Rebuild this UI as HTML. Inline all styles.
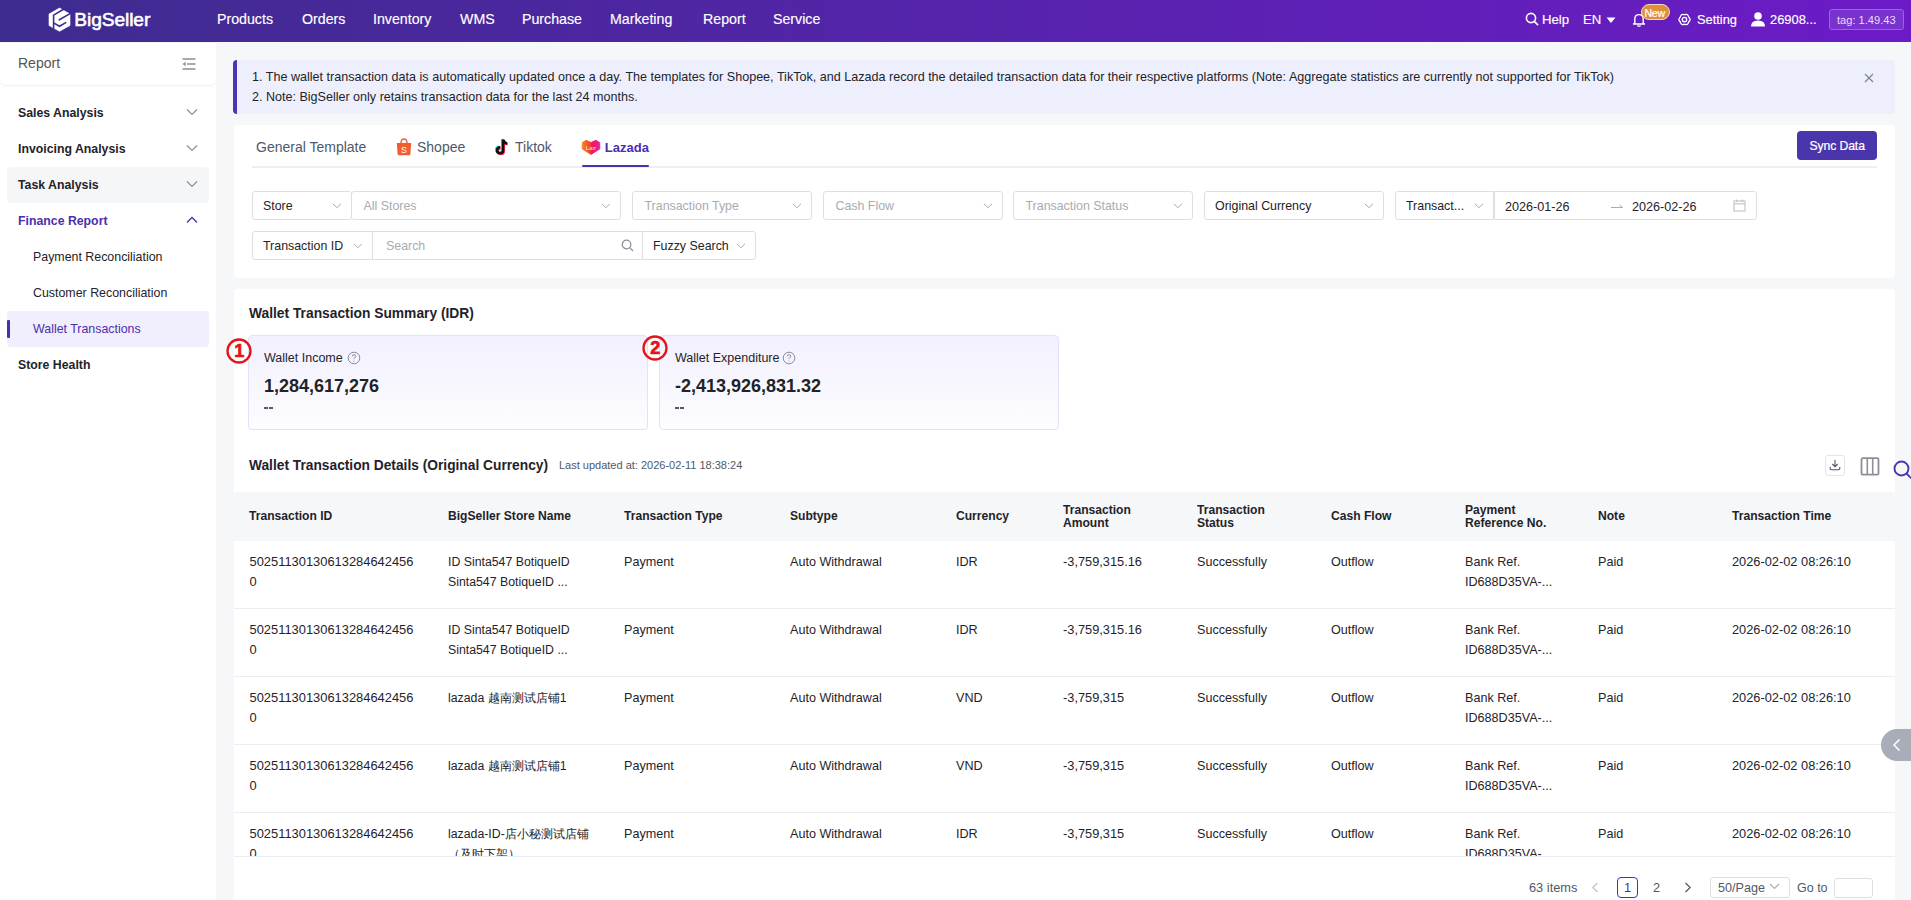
<!DOCTYPE html>
<html><head><meta charset="utf-8"><title>Wallet Transactions</title>
<style>
html,body{margin:0;padding:0;width:1911px;height:900px;overflow:hidden;background:#f5f6f8;font-family:"Liberation Sans",sans-serif}
.r{position:absolute}
.t{position:absolute;white-space:nowrap;line-height:20px}
</style></head><body>
<div class="r" style="left:0px;top:0px;width:1911px;height:42px;background:linear-gradient(90deg,#3e2c8f 0%,#6c1bc6 100%)"></div>
<svg class="r" style="left:44px;top:4px" width="32" height="32" viewBox="0 0 32 32">
<path d="M15.5 4 L26 10 L26 21.5 L15.5 27.3 L5 21.5 L5 10 Z" fill="#fff" stroke="#fff" stroke-width="0.6" stroke-linejoin="round"/>
<path d="M19.6 5.3 L9.6 11.1 L9.6 24.6 M9.6 18.9 L15.5 22.3 L21.8 18.6 M15.3 15.8 L27 9.1" fill="none" stroke="#3f2c90" stroke-width="1.6" stroke-linecap="round"/>
</svg>
<div class="t " style="left:74.3px;top:9.95px;font-size:19.2px;font-weight:400;color:#fff;-webkit-text-stroke:0.6px #fff;letter-spacing:-0.1px">BigSeller</div>
<div class="t " style="left:217px;top:8.78px;font-size:14.2px;font-weight:400;color:#fff;-webkit-text-stroke:0.15px #fff">Products</div>
<div class="t " style="left:302px;top:8.78px;font-size:14.2px;font-weight:400;color:#fff;-webkit-text-stroke:0.15px #fff">Orders</div>
<div class="t " style="left:373px;top:8.78px;font-size:14.2px;font-weight:400;color:#fff;-webkit-text-stroke:0.15px #fff">Inventory</div>
<div class="t " style="left:460px;top:8.78px;font-size:14.2px;font-weight:400;color:#fff;-webkit-text-stroke:0.15px #fff">WMS</div>
<div class="t " style="left:522px;top:8.78px;font-size:14.2px;font-weight:400;color:#fff;-webkit-text-stroke:0.15px #fff">Purchase</div>
<div class="t " style="left:610px;top:8.78px;font-size:14.2px;font-weight:400;color:#fff;-webkit-text-stroke:0.15px #fff">Marketing</div>
<div class="t " style="left:703px;top:8.78px;font-size:14.2px;font-weight:400;color:#fff;-webkit-text-stroke:0.15px #fff">Report</div>
<div class="t " style="left:773px;top:8.78px;font-size:14.2px;font-weight:400;color:#fff;-webkit-text-stroke:0.15px #fff">Service</div>
<svg class="r" style="left:1525px;top:12px" width="14" height="14" viewBox="0 0 14 14"><circle cx="6" cy="6" r="4.6" fill="none" stroke="#fff" stroke-width="1.6"/><path d="M9.3 9.3 L12.6 12.6" stroke="#fff" stroke-width="1.7" stroke-linecap="round"/></svg>
<div class="t " style="left:1542px;top:9.93px;font-size:13.2px;font-weight:400;color:#fff;-webkit-text-stroke:0.15px #fff">Help</div>
<div class="t " style="left:1583px;top:9.93px;font-size:13.2px;font-weight:400;color:#fff;-webkit-text-stroke:0.15px #fff">EN</div>
<svg class="r" style="left:1606px;top:17px" width="10" height="7" viewBox="0 0 10 7"><path d="M0.5 0.5 L9.5 0.5 L5 6 Z" fill="#fff"/></svg>
<svg class="r" style="left:1632px;top:13px" width="14" height="14" viewBox="0 0 14 14"><path d="M2.8 10 L2.8 6.2 Q2.8 1.6 7 1.6 Q11.2 1.6 11.2 6.2 L11.2 10 L12.5 11 L1.5 11 Z" fill="none" stroke="#fff" stroke-width="1.4" stroke-linejoin="round"/><path d="M5.4 12.4 Q7 13.8 8.6 12.4" fill="none" stroke="#fff" stroke-width="1.3"/></svg>
<div class="r" style="left:1641px;top:4px;width:29px;height:16px;border-radius:8px;background:#df8f3e;border:1px solid #f3d9bd;box-sizing:border-box"></div>
<div class="t " style="left:1644.5px;top:2.93px;font-size:10.6px;font-weight:400;color:#fff;letter-spacing:-0.3px;-webkit-text-stroke:0.2px #fff">New</div>
<svg class="r" style="left:1676.5px;top:12.3px" width="15" height="15" viewBox="0 0 15 15"><path d="M12.64 6.32 Q13.70 7.50 12.64 8.68 Q11.57 9.85 11.09 11.36 Q10.60 12.87 9.05 12.53 Q7.50 12.20 5.95 12.53 Q4.40 12.87 3.91 11.36 Q3.43 9.85 2.36 8.68 Q1.30 7.50 2.36 6.33 Q3.43 5.15 3.91 3.64 Q4.40 2.13 5.95 2.47 Q7.50 2.80 9.05 2.47 Q10.60 2.13 11.09 3.64 Q11.57 5.15 12.64 6.32 Z" fill="none" stroke="#fff" stroke-width="1.35" stroke-linejoin="round"/><circle cx="7.5" cy="7.5" r="2.2" fill="none" stroke="#fff" stroke-width="1.35"/></svg>
<div class="t " style="left:1697px;top:10.05px;font-size:12.85px;font-weight:400;color:#fff;-webkit-text-stroke:0.15px #fff">Setting</div>
<svg class="r" style="left:1750px;top:11px" width="16" height="16" viewBox="0 0 16 16"><circle cx="8" cy="5" r="3.8" fill="#fff"/><path d="M1 15.5 Q1 9.5 8 9.5 Q15 9.5 15 15.5 Z" fill="#fff"/></svg>
<div class="t " style="left:1770px;top:10.03px;font-size:12.9px;font-weight:400;color:#fff;-webkit-text-stroke:0.15px #fff">26908...</div>
<div class="r" style="left:1829px;top:9px;width:75px;height:21px;border-radius:3px;background:#7a32cf;border:1px solid #9a62dc;box-sizing:border-box"></div>
<div class="t " style="left:1837px;top:9.65px;font-size:11.1px;font-weight:400;color:#e8dcf7;">tag: 1.49.43</div>
<div class="r" style="left:0px;top:42px;width:216px;height:858px;background:#fff"></div>
<div class="r" style="left:0px;top:42px;width:216px;height:43px;background:#fff;border-radius:0 0 6px 6px;box-shadow:0 1px 2px rgba(0,0,0,0.07)"></div>
<div class="r" style="left:0px;top:42px;width:216px;height:1px;background:#f2f3f5"></div>
<div class="t " style="left:18px;top:53.45px;font-size:14px;font-weight:400;color:#555;">Report</div>
<svg class="r" style="left:182px;top:58px" width="14" height="12" viewBox="0 0 14 12"><path d="M0.5 1 H13.5 M5 6 H13.5 M0.5 11 H13.5" stroke="#8a8f99" stroke-width="1.5"/><path d="M0.5 6 L3.6 3.8 L3.6 8.2 Z" fill="#8a8f99"/></svg>
<div class="r" style="left:7px;top:167px;width:202px;height:36px;background:#f5f6f8;border-radius:4px"></div>
<div class="t " style="left:18px;top:102.94px;font-size:12.3px;font-weight:700;color:#1f2329;">Sales Analysis</div>
<svg class="r" style="left:186px;top:108.2px" width="12" height="8" viewBox="0 0 12 8"><path d="M1 1.5 L6 6.5 L11 1.5" fill="none" stroke="#8a8f99" stroke-width="1.2"/></svg>
<div class="t " style="left:18px;top:138.94px;font-size:12.3px;font-weight:700;color:#1f2329;">Invoicing Analysis</div>
<svg class="r" style="left:186px;top:144.2px" width="12" height="8" viewBox="0 0 12 8"><path d="M1 1.5 L6 6.5 L11 1.5" fill="none" stroke="#8a8f99" stroke-width="1.2"/></svg>
<div class="t " style="left:18px;top:174.94px;font-size:12.3px;font-weight:700;color:#1f2329;">Task Analysis</div>
<svg class="r" style="left:186px;top:180.2px" width="12" height="8" viewBox="0 0 12 8"><path d="M1 1.5 L6 6.5 L11 1.5" fill="none" stroke="#8a8f99" stroke-width="1.2"/></svg>
<div class="t " style="left:18px;top:210.94px;font-size:12.3px;font-weight:700;color:#4b2fb0;">Finance Report</div>
<svg class="r" style="left:186px;top:216.2px" width="12" height="8" viewBox="0 0 12 8"><path d="M1 6.5 L6 1.5 L11 6.5" fill="none" stroke="#4b2fb0" stroke-width="1.3"/></svg>
<div class="t " style="left:18px;top:355.04px;font-size:12.3px;font-weight:700;color:#1f2329;">Store Health</div>
<div class="r" style="left:7px;top:311px;width:202px;height:36px;background:#f1eefd;border-radius:4px"></div>
<div class="r" style="left:7px;top:320px;width:3px;height:18px;background:#4b2fb0;border-radius:1px"></div>
<div class="t " style="left:33px;top:246.50px;font-size:12.4px;font-weight:400;color:#1f2329;">Payment Reconciliation</div>
<div class="t " style="left:33px;top:282.50px;font-size:12.4px;font-weight:400;color:#1f2329;">Customer Reconciliation</div>
<div class="t " style="left:33px;top:318.50px;font-size:12.4px;font-weight:400;color:#4b2fb0;">Wallet Transactions</div>
<div class="r" style="left:216px;top:42px;width:1695px;height:858px;background:#f6f7f9"></div>
<div class="r" style="left:233px;top:60px;width:1662px;height:54px;background:#edf0fc;border-radius:4px"></div>
<div class="r" style="left:233px;top:60px;width:4px;height:54px;background:#4b35b0;border-radius:4px 0 0 4px"></div>
<div class="t " style="left:252px;top:67.24px;font-size:12.58px;font-weight:400;color:#1f2329;">1. The wallet transaction data is automatically updated once a day. The templates for Shopee, TikTok, and Lazada record the detailed transaction data for their respective platforms (Note: Aggregate statistics are currently not supported for TikTok)</div>
<div class="t " style="left:252px;top:87.15px;font-size:12.55px;font-weight:400;color:#1f2329;">2. Note: BigSeller only retains transaction data for the last 24 months.</div>
<svg class="r" style="left:1864px;top:73px" width="10" height="10" viewBox="0 0 10 10"><path d="M1 1 L9 9 M9 1 L1 9" stroke="#7a7f88" stroke-width="1.1"/></svg>
<div class="r" style="left:234px;top:125px;width:1661px;height:153px;background:#fff;border-radius:4px"></div>
<div class="r" style="left:252px;top:166px;width:1625px;height:2px;background:#eceef1"></div>
<div class="t " style="left:256px;top:137.15px;font-size:14px;font-weight:400;color:#4e5969;">General Template</div>
<svg class="r" style="left:396px;top:138px" width="16" height="18" viewBox="0 0 16 18"><path d="M5 5 Q5 1 8 1 Q11 1 11 5" fill="none" stroke="#f05d32" stroke-width="1.4"/><path d="M0.8 5 L15.2 5 L14.4 16 Q14.3 17.3 13 17.3 L3 17.3 Q1.7 17.3 1.6 16 Z" fill="#f05d32"/><text x="8" y="14.5" font-family="Liberation Sans" font-size="9" fill="#fff" text-anchor="middle">S</text></svg>
<div class="t " style="left:417px;top:137.15px;font-size:14px;font-weight:400;color:#4e5969;">Shopee</div>
<svg class="r" style="left:493px;top:138px" width="18" height="18" viewBox="0 0 18 18">
<g transform="translate(-0.8,-0.6)"><path d="M10 1.5 L10 12.3 Q10 15.3 7 15.3 Q4 15.3 4 12.3 Q4 9.3 7 9.3 M10 1.5 Q10.5 5 14 5.5" fill="none" stroke="#25f4ee" stroke-width="2.6"/></g>
<g transform="translate(0.8,0.6)"><path d="M10 1.5 L10 12.3 Q10 15.3 7 15.3 Q4 15.3 4 12.3 Q4 9.3 7 9.3 M10 1.5 Q10.5 5 14 5.5" fill="none" stroke="#fe2c55" stroke-width="2.6"/></g>
<path d="M10 1.5 L10 12.3 Q10 15.3 7 15.3 Q4 15.3 4 12.3 Q4 9.3 7 9.3 M10 1.5 Q10.5 5 14 5.5" fill="none" stroke="#111" stroke-width="2.6"/></svg>
<div class="t " style="left:515px;top:137.15px;font-size:14px;font-weight:400;color:#4e5969;">Tiktok</div>
<svg class="r" style="left:581px;top:139px" width="20" height="17" viewBox="0 0 20 17"><defs><linearGradient id="lz" x1="0" y1="0" x2="1" y2="0"><stop offset="0" stop-color="#f5821f"/><stop offset="0.45" stop-color="#f2432f"/><stop offset="0.55" stop-color="#ef1a4f"/><stop offset="1" stop-color="#f01aa8"/></linearGradient></defs><path d="M1.3 3.6 L5.1 1.3 L10 3.5 L14.9 1.3 L18.7 3.6 L18.7 10 L10 15.4 L1.3 10 Z" fill="url(#lz)" stroke="url(#lz)" stroke-width="0.9" stroke-linejoin="round"/><text x="9.8" y="10.6" font-family="Liberation Sans" font-size="6.2" fill="#fff" fill-opacity="0.9" text-anchor="middle">Laz</text></svg>
<div class="t " style="left:604.8px;top:138.30px;font-size:13px;font-weight:700;color:#4b2fb0;">Lazada</div>
<div class="r" style="left:582px;top:165px;width:67px;height:2.4px;background:#4b2fb0;border-radius:1px"></div>
<div class="r" style="left:1797px;top:131px;width:80px;height:29px;background:#4a35ad;border-radius:4px"></div>
<div class="t " style="left:1809.5px;top:136.07px;font-size:12.2px;font-weight:400;color:#fff;letter-spacing:-0.1px;-webkit-text-stroke:0.2px #fff">Sync Data</div>
<div class="r" style="left:252px;top:191px;width:99.5px;height:29px;box-sizing:border-box;border:1px solid #dcdfe6;border-radius:3px;background:#fff"></div>
<div class="t " style="left:263px;top:196.20px;font-size:12.4px;font-weight:400;color:#1f2329;">Store</div>
<svg class="r" style="left:331.5px;top:202.6px" width="10" height="6" viewBox="0 0 10 6"><path d="M0.8 0.8 L4.9 4.7 L9 0.8" fill="none" stroke="#a8abb2" stroke-width="1"/></svg>
<div class="r" style="left:351px;top:191px;width:270px;height:29px;box-sizing:border-box;border:1px solid #dcdfe6;border-radius:3px;background:#fff"></div>
<div class="t " style="left:363.5px;top:196.20px;font-size:12.4px;font-weight:400;color:#a8abb2;">All Stores</div>
<svg class="r" style="left:601px;top:202.6px" width="10" height="6" viewBox="0 0 10 6"><path d="M0.8 0.8 L4.9 4.7 L9 0.8" fill="none" stroke="#a8abb2" stroke-width="1"/></svg>
<div class="r" style="left:632px;top:191px;width:180px;height:29px;box-sizing:border-box;border:1px solid #dcdfe6;border-radius:3px;background:#fff"></div>
<div class="t " style="left:644.5px;top:196.20px;font-size:12.4px;font-weight:400;color:#a8abb2;">Transaction Type</div>
<svg class="r" style="left:792px;top:202.6px" width="10" height="6" viewBox="0 0 10 6"><path d="M0.8 0.8 L4.9 4.7 L9 0.8" fill="none" stroke="#a8abb2" stroke-width="1"/></svg>
<div class="r" style="left:823px;top:191px;width:180px;height:29px;box-sizing:border-box;border:1px solid #dcdfe6;border-radius:3px;background:#fff"></div>
<div class="t " style="left:835.5px;top:196.20px;font-size:12.4px;font-weight:400;color:#a8abb2;">Cash Flow</div>
<svg class="r" style="left:983px;top:202.6px" width="10" height="6" viewBox="0 0 10 6"><path d="M0.8 0.8 L4.9 4.7 L9 0.8" fill="none" stroke="#a8abb2" stroke-width="1"/></svg>
<div class="r" style="left:1013px;top:191px;width:180px;height:29px;box-sizing:border-box;border:1px solid #dcdfe6;border-radius:3px;background:#fff"></div>
<div class="t " style="left:1025.5px;top:196.20px;font-size:12.4px;font-weight:400;color:#a8abb2;">Transaction Status</div>
<svg class="r" style="left:1173px;top:202.6px" width="10" height="6" viewBox="0 0 10 6"><path d="M0.8 0.8 L4.9 4.7 L9 0.8" fill="none" stroke="#a8abb2" stroke-width="1"/></svg>
<div class="r" style="left:1204px;top:191px;width:180px;height:29px;box-sizing:border-box;border:1px solid #dcdfe6;border-radius:3px;background:#fff"></div>
<div class="t " style="left:1215px;top:196.20px;font-size:12.4px;font-weight:400;color:#1f2329;">Original Currency</div>
<svg class="r" style="left:1364px;top:202.6px" width="10" height="6" viewBox="0 0 10 6"><path d="M0.8 0.8 L4.9 4.7 L9 0.8" fill="none" stroke="#a8abb2" stroke-width="1"/></svg>
<div class="r" style="left:1395px;top:191px;width:99px;height:29px;box-sizing:border-box;border:1px solid #dcdfe6;border-radius:3px 0 0 3px;background:#fff"></div>
<div class="t " style="left:1406px;top:196.20px;font-size:12.4px;font-weight:400;color:#1f2329;">Transact...</div>
<svg class="r" style="left:1474px;top:202.6px" width="10" height="6" viewBox="0 0 10 6"><path d="M0.8 0.8 L4.9 4.7 L9 0.8" fill="none" stroke="#a8abb2" stroke-width="1"/></svg>
<div class="r" style="left:1494px;top:191px;width:263px;height:29px;box-sizing:border-box;border:1px solid #dcdfe6;border-radius:0 3px 3px 0;background:#fff"></div>
<div class="t " style="left:1505px;top:196.83px;font-size:12.6px;font-weight:400;color:#1f2329;">2026-01-26</div>
<div class="t " style="left:1632px;top:196.83px;font-size:12.6px;font-weight:400;color:#1f2329;">2026-02-26</div>
<svg class="r" style="left:1610px;top:202px" width="14" height="8" viewBox="0 0 14 8"><path d="M1 5.5 L12.5 5.5 L9.5 3" fill="none" stroke="#a8abb2" stroke-width="1"/></svg>
<svg class="r" style="left:1733px;top:199px" width="13" height="13" viewBox="0 0 13 13"><rect x="1" y="2" width="11" height="10" fill="none" stroke="#b8bcc4" stroke-width="1"/><path d="M1 4.8 H12 M3.8 0.5 V3 M9.2 0.5 V3" stroke="#b8bcc4" stroke-width="1"/></svg>
<div class="r" style="left:252px;top:231px;width:121px;height:29px;box-sizing:border-box;border:1px solid #dcdfe6;border-radius:3px 0 0 3px;background:#fff"></div>
<div class="t " style="left:263px;top:236.20px;font-size:12.4px;font-weight:400;color:#1f2329;">Transaction ID</div>
<svg class="r" style="left:353px;top:242.6px" width="10" height="6" viewBox="0 0 10 6"><path d="M0.8 0.8 L4.9 4.7 L9 0.8" fill="none" stroke="#a8abb2" stroke-width="1"/></svg>
<div class="r" style="left:372px;top:231px;width:271px;height:29px;box-sizing:border-box;border:1px solid #dcdfe6;background:#fff"></div>
<div class="t " style="left:386px;top:236.30px;font-size:12.4px;font-weight:400;color:#a8abb2;">Search</div>
<svg class="r" style="left:621px;top:239px" width="13" height="13" viewBox="0 0 13 13"><circle cx="5.5" cy="5.5" r="4.3" fill="none" stroke="#8a8f99" stroke-width="1.2"/><path d="M8.7 8.7 L12 12" stroke="#8a8f99" stroke-width="1.2"/></svg>
<div class="r" style="left:642px;top:231px;width:114px;height:29px;box-sizing:border-box;border:1px solid #dcdfe6;border-radius:0 3px 3px 0;background:#fff"></div>
<div class="t " style="left:653px;top:236.20px;font-size:12.4px;font-weight:400;color:#1f2329;">Fuzzy Search</div>
<svg class="r" style="left:736px;top:242.6px" width="10" height="6" viewBox="0 0 10 6"><path d="M0.8 0.8 L4.9 4.7 L9 0.8" fill="none" stroke="#a8abb2" stroke-width="1"/></svg>
<div class="r" style="left:234px;top:289px;width:1661px;height:611px;background:#fff;border-radius:4px 4px 0 0"></div>
<div class="t " style="left:249px;top:304.42px;font-size:13.8px;font-weight:700;color:#1f2329;">Wallet Transaction Summary (IDR)</div>
<div class="r" style="left:248px;top:335px;width:400px;height:95px;box-sizing:border-box;border:1px solid #e1e3fb;border-radius:4px;background:linear-gradient(180deg,#f2f0fe 0%,#fdfdff 100%)"></div>
<div class="t " style="left:264px;top:348.07px;font-size:12.5px;font-weight:400;color:#1f2329;">Wallet Income</div>
<div class="r" style="left:264px;top:407px;width:4px;height:2px;background:#555b66"></div>
<div class="r" style="left:269px;top:407px;width:4px;height:2px;background:#555b66"></div>
<div class="t " style="left:264px;top:375.56px;font-size:18px;font-weight:700;color:#1f2329;">1,284,617,276</div>
<div class="r" style="left:659px;top:335px;width:400px;height:95px;box-sizing:border-box;border:1px solid #e1e3fb;border-radius:4px;background:linear-gradient(180deg,#f2f0fe 0%,#fdfdff 100%)"></div>
<div class="t " style="left:675px;top:348.07px;font-size:12.5px;font-weight:400;color:#1f2329;">Wallet Expenditure</div>
<div class="r" style="left:675px;top:407px;width:4px;height:2px;background:#555b66"></div>
<div class="r" style="left:680px;top:407px;width:4px;height:2px;background:#555b66"></div>
<div class="t " style="left:675px;top:375.56px;font-size:18px;font-weight:700;color:#1f2329;">-2,413,926,831.32</div>
<svg class="r" style="left:347px;top:351px" width="14" height="14" viewBox="0 0 14 14"><circle cx="7" cy="7" r="5.8" fill="none" stroke="#8a8f99" stroke-width="1"/><path d="M5.2 5.4 Q5.2 3.7 7 3.7 Q8.8 3.7 8.8 5.3 Q8.8 6.3 7.6 6.8 Q7 7.1 7 8.1" fill="none" stroke="#8a8f99" stroke-width="1"/><circle cx="7" cy="10" r="0.6" fill="#8a8f99"/></svg>
<svg class="r" style="left:782px;top:351px" width="14" height="14" viewBox="0 0 14 14"><circle cx="7" cy="7" r="5.8" fill="none" stroke="#8a8f99" stroke-width="1"/><path d="M5.2 5.4 Q5.2 3.7 7 3.7 Q8.8 3.7 8.8 5.3 Q8.8 6.3 7.6 6.8 Q7 7.1 7 8.1" fill="none" stroke="#8a8f99" stroke-width="1"/><circle cx="7" cy="10" r="0.6" fill="#8a8f99"/></svg>
<svg class="r" style="left:226px;top:338px" width="26" height="26" viewBox="0 0 26 26"><circle cx="13" cy="13" r="11.5" fill="none" stroke="#e3131b" stroke-width="2.3"/><text x="13.2" y="18.8" font-family="Liberation Sans" font-weight="700" font-size="18" fill="#e3131b" stroke="#e3131b" stroke-width="0.7" text-anchor="middle">1</text></svg>
<svg class="r" style="left:642px;top:335px" width="26" height="26" viewBox="0 0 26 26"><circle cx="13" cy="13" r="11.5" fill="none" stroke="#e3131b" stroke-width="2.3"/><text x="13.2" y="18.8" font-family="Liberation Sans" font-weight="700" font-size="18" fill="#e3131b" stroke="#e3131b" stroke-width="0.7" text-anchor="middle">2</text></svg>
<div class="t " style="left:249px;top:455.64px;font-size:13.75px;font-weight:700;color:#1f2329;">Wallet Transaction Details (Original Currency)</div>
<div class="t " style="left:559px;top:454.99px;font-size:11px;font-weight:400;color:#4e5969;">Last updated at: 2026-02-11 18:38:24</div>
<div class="r" style="left:1825px;top:455px;width:20px;height:21px;box-sizing:border-box;border:1px solid #e3e5ea;border-radius:3px;background:#fff"></div>
<svg class="r" style="left:1829px;top:459px" width="12" height="12" viewBox="0 0 12 12"><path d="M6 1 V7.5 M3.3 5 L6 7.7 L8.7 5" fill="none" stroke="#4e5969" stroke-width="1.1"/><path d="M1.2 8 V9.6 Q1.2 10.8 2.4 10.8 H9.6 Q10.8 10.8 10.8 9.6 V8" fill="none" stroke="#4e5969" stroke-width="1.1"/></svg>
<svg class="r" style="left:1860px;top:457px" width="20" height="19" viewBox="0 0 20 19"><rect x="1.5" y="1.2" width="17" height="16.5" rx="1.5" fill="none" stroke="#8a8f99" stroke-width="1.8"/><path d="M7.3 1.5 V17.5 M12.7 1.5 V17.5" stroke="#8a8f99" stroke-width="1.6"/></svg>
<svg class="r" style="left:1892px;top:459px" width="19" height="22" viewBox="0 0 19 22"><circle cx="9.5" cy="9.5" r="7" fill="none" stroke="#4b35b5" stroke-width="1.9"/><path d="M14.5 14.5 L20 20" stroke="#4b35b5" stroke-width="1.9"/></svg>
<div class="r" style="left:234px;top:492px;width:1661px;height:49px;background:#f6f7f9;border-radius:4px 4px 0 0"></div>
<div class="t " style="left:249px;top:506.01px;font-size:12.1px;font-weight:700;color:#1f2329;">Transaction ID</div>
<div class="t " style="left:448px;top:506.01px;font-size:12.1px;font-weight:700;color:#1f2329;">BigSeller Store Name</div>
<div class="t " style="left:624px;top:506.01px;font-size:12.1px;font-weight:700;color:#1f2329;">Transaction Type</div>
<div class="t " style="left:790px;top:506.01px;font-size:12.1px;font-weight:700;color:#1f2329;">Subtype</div>
<div class="t " style="left:956px;top:506.01px;font-size:12.1px;font-weight:700;color:#1f2329;">Currency</div>
<div class="t " style="left:1063px;top:499.81px;font-size:12.1px;font-weight:700;color:#1f2329;">Transaction</div>
<div class="t " style="left:1063px;top:512.81px;font-size:12.1px;font-weight:700;color:#1f2329;">Amount</div>
<div class="t " style="left:1197px;top:499.81px;font-size:12.1px;font-weight:700;color:#1f2329;">Transaction</div>
<div class="t " style="left:1197px;top:512.81px;font-size:12.1px;font-weight:700;color:#1f2329;">Status</div>
<div class="t " style="left:1331px;top:506.01px;font-size:12.1px;font-weight:700;color:#1f2329;">Cash Flow</div>
<div class="t " style="left:1465px;top:499.81px;font-size:12.1px;font-weight:700;color:#1f2329;">Payment</div>
<div class="t " style="left:1465px;top:512.81px;font-size:12.1px;font-weight:700;color:#1f2329;">Reference No.</div>
<div class="t " style="left:1598px;top:506.01px;font-size:12.1px;font-weight:700;color:#1f2329;">Note</div>
<div class="t " style="left:1732px;top:506.01px;font-size:12.1px;font-weight:700;color:#1f2329;">Transaction Time</div>
<div class="r" style="left:234px;top:541px;width:1661px;height:315px;overflow:hidden">
<div class="t " style="left:15.5px;top:10.53px;font-size:12.9px;font-weight:400;color:#1f2329;">50251130130613284642456</div>
<div class="t " style="left:15.5px;top:30.53px;font-size:12.9px;font-weight:400;color:#1f2329;">0</div>
<div class="t " style="left:214px;top:10.74px;font-size:12.3px;font-weight:400;color:#1f2329;">ID Sinta547 BotiqueID</div>
<div class="t " style="left:214px;top:30.74px;font-size:12.3px;font-weight:400;color:#1f2329;">Sinta547 BotiqueID ...</div>
<div class="t " style="left:390px;top:10.63px;font-size:12.6px;font-weight:400;color:#1f2329;">Payment</div>
<div class="t " style="left:556px;top:10.63px;font-size:12.6px;font-weight:400;color:#1f2329;">Auto Withdrawal</div>
<div class="t " style="left:722px;top:10.63px;font-size:12.6px;font-weight:400;color:#1f2329;">IDR</div>
<div class="t " style="left:829px;top:10.56px;font-size:12.8px;font-weight:400;color:#1f2329;">-3,759,315.16</div>
<div class="t " style="left:963px;top:10.63px;font-size:12.6px;font-weight:400;color:#1f2329;">Successfully</div>
<div class="t " style="left:1097px;top:10.63px;font-size:12.6px;font-weight:400;color:#1f2329;">Outflow</div>
<div class="t " style="left:1231px;top:10.63px;font-size:12.6px;font-weight:400;color:#1f2329;">Bank Ref.</div>
<div class="t " style="left:1231px;top:30.63px;font-size:12.6px;font-weight:400;color:#1f2329;">ID688D35VA-...</div>
<div class="t " style="left:1364px;top:10.63px;font-size:12.6px;font-weight:400;color:#1f2329;">Paid</div>
<div class="t " style="left:1498px;top:10.56px;font-size:12.8px;font-weight:400;color:#1f2329;">2026-02-02 08:26:10</div>
<div class="r" style="left:0px;top:67px;width:1661px;height:1px;background:#ebedf0"></div>
<div class="t " style="left:15.5px;top:78.53px;font-size:12.9px;font-weight:400;color:#1f2329;">50251130130613284642456</div>
<div class="t " style="left:15.5px;top:98.53px;font-size:12.9px;font-weight:400;color:#1f2329;">0</div>
<div class="t " style="left:214px;top:78.74px;font-size:12.3px;font-weight:400;color:#1f2329;">ID Sinta547 BotiqueID</div>
<div class="t " style="left:214px;top:98.74px;font-size:12.3px;font-weight:400;color:#1f2329;">Sinta547 BotiqueID ...</div>
<div class="t " style="left:390px;top:78.63px;font-size:12.6px;font-weight:400;color:#1f2329;">Payment</div>
<div class="t " style="left:556px;top:78.63px;font-size:12.6px;font-weight:400;color:#1f2329;">Auto Withdrawal</div>
<div class="t " style="left:722px;top:78.63px;font-size:12.6px;font-weight:400;color:#1f2329;">IDR</div>
<div class="t " style="left:829px;top:78.56px;font-size:12.8px;font-weight:400;color:#1f2329;">-3,759,315.16</div>
<div class="t " style="left:963px;top:78.63px;font-size:12.6px;font-weight:400;color:#1f2329;">Successfully</div>
<div class="t " style="left:1097px;top:78.63px;font-size:12.6px;font-weight:400;color:#1f2329;">Outflow</div>
<div class="t " style="left:1231px;top:78.63px;font-size:12.6px;font-weight:400;color:#1f2329;">Bank Ref.</div>
<div class="t " style="left:1231px;top:98.63px;font-size:12.6px;font-weight:400;color:#1f2329;">ID688D35VA-...</div>
<div class="t " style="left:1364px;top:78.63px;font-size:12.6px;font-weight:400;color:#1f2329;">Paid</div>
<div class="t " style="left:1498px;top:78.56px;font-size:12.8px;font-weight:400;color:#1f2329;">2026-02-02 08:26:10</div>
<div class="r" style="left:0px;top:135px;width:1661px;height:1px;background:#ebedf0"></div>
<div class="t " style="left:15.5px;top:146.53px;font-size:12.9px;font-weight:400;color:#1f2329;">50251130130613284642456</div>
<div class="t " style="left:15.5px;top:166.53px;font-size:12.9px;font-weight:400;color:#1f2329;">0</div>
<div class="t " style="left:214px;top:146.74px;font-size:12.3px;font-weight:400;color:#1f2329;">lazada 越南测试店铺1</div>
<div class="t " style="left:390px;top:146.63px;font-size:12.6px;font-weight:400;color:#1f2329;">Payment</div>
<div class="t " style="left:556px;top:146.63px;font-size:12.6px;font-weight:400;color:#1f2329;">Auto Withdrawal</div>
<div class="t " style="left:722px;top:146.63px;font-size:12.6px;font-weight:400;color:#1f2329;">VND</div>
<div class="t " style="left:829px;top:146.56px;font-size:12.8px;font-weight:400;color:#1f2329;">-3,759,315</div>
<div class="t " style="left:963px;top:146.63px;font-size:12.6px;font-weight:400;color:#1f2329;">Successfully</div>
<div class="t " style="left:1097px;top:146.63px;font-size:12.6px;font-weight:400;color:#1f2329;">Outflow</div>
<div class="t " style="left:1231px;top:146.63px;font-size:12.6px;font-weight:400;color:#1f2329;">Bank Ref.</div>
<div class="t " style="left:1231px;top:166.63px;font-size:12.6px;font-weight:400;color:#1f2329;">ID688D35VA-...</div>
<div class="t " style="left:1364px;top:146.63px;font-size:12.6px;font-weight:400;color:#1f2329;">Paid</div>
<div class="t " style="left:1498px;top:146.56px;font-size:12.8px;font-weight:400;color:#1f2329;">2026-02-02 08:26:10</div>
<div class="r" style="left:0px;top:203px;width:1661px;height:1px;background:#ebedf0"></div>
<div class="t " style="left:15.5px;top:214.53px;font-size:12.9px;font-weight:400;color:#1f2329;">50251130130613284642456</div>
<div class="t " style="left:15.5px;top:234.53px;font-size:12.9px;font-weight:400;color:#1f2329;">0</div>
<div class="t " style="left:214px;top:214.74px;font-size:12.3px;font-weight:400;color:#1f2329;">lazada 越南测试店铺1</div>
<div class="t " style="left:390px;top:214.63px;font-size:12.6px;font-weight:400;color:#1f2329;">Payment</div>
<div class="t " style="left:556px;top:214.63px;font-size:12.6px;font-weight:400;color:#1f2329;">Auto Withdrawal</div>
<div class="t " style="left:722px;top:214.63px;font-size:12.6px;font-weight:400;color:#1f2329;">VND</div>
<div class="t " style="left:829px;top:214.56px;font-size:12.8px;font-weight:400;color:#1f2329;">-3,759,315</div>
<div class="t " style="left:963px;top:214.63px;font-size:12.6px;font-weight:400;color:#1f2329;">Successfully</div>
<div class="t " style="left:1097px;top:214.63px;font-size:12.6px;font-weight:400;color:#1f2329;">Outflow</div>
<div class="t " style="left:1231px;top:214.63px;font-size:12.6px;font-weight:400;color:#1f2329;">Bank Ref.</div>
<div class="t " style="left:1231px;top:234.63px;font-size:12.6px;font-weight:400;color:#1f2329;">ID688D35VA-...</div>
<div class="t " style="left:1364px;top:214.63px;font-size:12.6px;font-weight:400;color:#1f2329;">Paid</div>
<div class="t " style="left:1498px;top:214.56px;font-size:12.8px;font-weight:400;color:#1f2329;">2026-02-02 08:26:10</div>
<div class="r" style="left:0px;top:271px;width:1661px;height:1px;background:#ebedf0"></div>
<div class="t " style="left:15.5px;top:282.53px;font-size:12.9px;font-weight:400;color:#1f2329;">50251130130613284642456</div>
<div class="t " style="left:15.5px;top:302.53px;font-size:12.9px;font-weight:400;color:#1f2329;">0</div>
<div class="t " style="left:214px;top:282.74px;font-size:12.3px;font-weight:400;color:#1f2329;">lazada-ID-店小秘测试店铺</div>
<div class="t " style="left:214px;top:302.74px;font-size:12.3px;font-weight:400;color:#1f2329;">（及时下架）</div>
<div class="t " style="left:390px;top:282.63px;font-size:12.6px;font-weight:400;color:#1f2329;">Payment</div>
<div class="t " style="left:556px;top:282.63px;font-size:12.6px;font-weight:400;color:#1f2329;">Auto Withdrawal</div>
<div class="t " style="left:722px;top:282.63px;font-size:12.6px;font-weight:400;color:#1f2329;">IDR</div>
<div class="t " style="left:829px;top:282.56px;font-size:12.8px;font-weight:400;color:#1f2329;">-3,759,315</div>
<div class="t " style="left:963px;top:282.63px;font-size:12.6px;font-weight:400;color:#1f2329;">Successfully</div>
<div class="t " style="left:1097px;top:282.63px;font-size:12.6px;font-weight:400;color:#1f2329;">Outflow</div>
<div class="t " style="left:1231px;top:282.63px;font-size:12.6px;font-weight:400;color:#1f2329;">Bank Ref.</div>
<div class="t " style="left:1231px;top:302.63px;font-size:12.6px;font-weight:400;color:#1f2329;">ID688D35VA-...</div>
<div class="t " style="left:1364px;top:282.63px;font-size:12.6px;font-weight:400;color:#1f2329;">Paid</div>
<div class="t " style="left:1498px;top:282.56px;font-size:12.8px;font-weight:400;color:#1f2329;">2026-02-02 08:26:10</div>
</div>
<div class="r" style="left:234px;top:856px;width:1661px;height:1px;background:#ebedf0"></div>
<div class="t " style="left:1529px;top:877.56px;font-size:12.8px;font-weight:400;color:#4e5969;">63 items</div>
<svg class="r" style="left:1591px;top:882px" width="8" height="11" viewBox="0 0 8 11"><path d="M6.5 1 L1.8 5.5 L6.5 10" fill="none" stroke="#c0c4cc" stroke-width="1.2"/></svg>
<div class="r" style="left:1617px;top:877px;width:21px;height:21px;box-sizing:border-box;border:1px solid #4b2fb0;border-radius:4px"></div>
<div class="t " style="left:1624px;top:877.56px;font-size:12.8px;font-weight:400;color:#4b2fb0;">1</div>
<div class="t " style="left:1653px;top:877.56px;font-size:12.8px;font-weight:400;color:#4e5969;">2</div>
<svg class="r" style="left:1684px;top:882px" width="8" height="11" viewBox="0 0 8 11"><path d="M1.5 1 L6.2 5.5 L1.5 10" fill="none" stroke="#4e5969" stroke-width="1.2"/></svg>
<div class="r" style="left:1710px;top:877px;width:80px;height:21px;box-sizing:border-box;border:1px solid #dcdfe6;border-radius:3px"></div>
<div class="t " style="left:1718px;top:877.63px;font-size:12.6px;font-weight:400;color:#4e5969;">50/Page</div>
<svg class="r" style="left:1769px;top:883px" width="11" height="7" viewBox="0 0 11 7"><path d="M1 1 L5.5 5.5 L10 1" fill="none" stroke="#a8abb2" stroke-width="1.1"/></svg>
<div class="t " style="left:1797px;top:877.67px;font-size:12.5px;font-weight:400;color:#4e5969;">Go to</div>
<div class="r" style="left:1834px;top:878px;width:39px;height:20px;box-sizing:border-box;border:1px solid #dcdfe6;border-radius:3px"></div>
<div class="r" style="left:1881px;top:729px;width:30px;height:32px;background:#a9adb8;border-radius:16px 0 0 16px"></div>
<svg class="r" style="left:1892px;top:738px" width="9" height="14" viewBox="0 0 9 14"><path d="M7.5 1.5 L2 7 L7.5 12.5" fill="none" stroke="#fff" stroke-width="1.5"/></svg>
</body></html>
